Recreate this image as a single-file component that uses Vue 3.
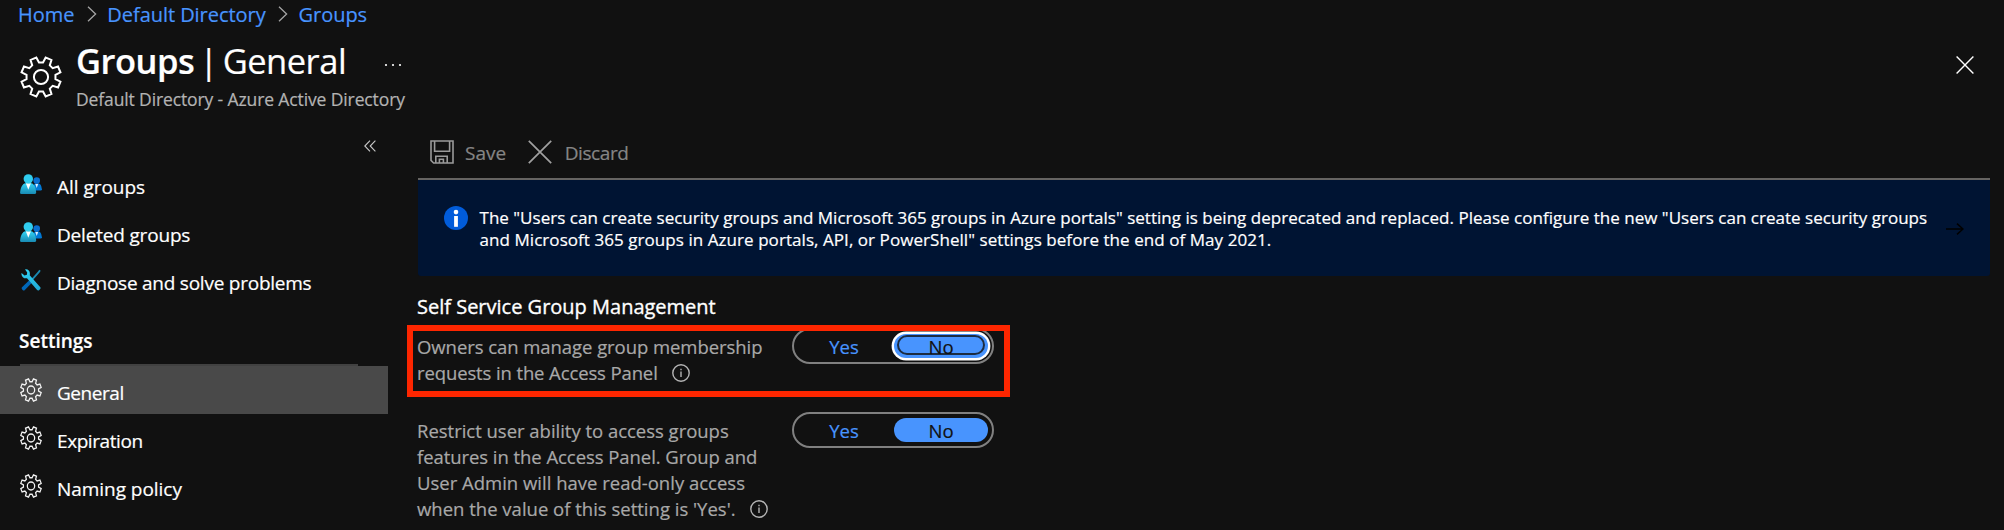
<script setup>
const crumbs = ['Home', 'Default Directory', 'Groups']

const topItems = [
  { label: 'All groups', icon: 'people', tracking: -0.04 },
  { label: 'Deleted groups', icon: 'people', tracking: -0.18 },
  { label: 'Diagnose and solve problems', icon: 'tools', tracking: -0.24 },
]

const settingsItems = [
  { label: 'General', icon: 'gear', tracking: -0.45, selected: true },
  { label: 'Expiration', icon: 'gear', tracking: -0.42 },
  { label: 'Naming policy', icon: 'gear', tracking: -0.04 },
]

const settings = [
  {
    lines: [
      { text: 'Owners can manage group membership', tracking: -0.06 },
      { text: 'requests in the Access Panel', tracking: -0.12 },
    ],
    focused: true,
  },
  {
    lines: [
      { text: 'Restrict user ability to access groups', tracking: -0.02 },
      { text: 'features in the Access Panel. Group and', tracking: -0.06 },
      { text: 'User Admin will have read-only access', tracking: 0 },
      { text: "when the value of this setting is 'Yes'.", tracking: 0 },
    ],
    focused: false,
  },
]

// Outline of an eight-tooth cog centred on the origin, notches on the axes.
function cog() {
  const pts = []
  for (let i = 0; i < 8; i++) {
    const base = i * 45
    for (const [deg, r] of [[-8, 14.6], [8, 14.6], [13.5, 20], [31.5, 20]]) {
      const a = ((base + deg) * Math.PI) / 180
      pts.push(`${(r * Math.sin(a)).toFixed(2)} ${(-r * Math.cos(a)).toFixed(2)}`)
    }
  }
  return `M${pts.join('L')}Z`
}
const cogPath = cog()
</script>

<template>
  <div class="portal">
    <nav class="crumbs">
      <template v-for="(c, i) in crumbs" :key="c">
        <svg v-if="i" class="crumb-sep" viewBox="0 0 10 16"><path d="M1 .8L8.6 8L1 15.2" /></svg>
        <a>{{ c }}</a>
      </template>
    </nav>

    <header class="head">
      <svg class="head-cog" viewBox="-21 -21 42 42">
        <path :d="cogPath" /><circle r="7.1" />
      </svg>
      <div class="head-text">
        <h1><b>Groups</b><span class="bar">|</span><span>General</span>
          <svg class="dots" viewBox="0 0 18 4"><circle cx="2" cy="2" r="1.1" /><circle cx="9" cy="2" r="1.1" /><circle cx="16" cy="2" r="1.1" /></svg>
        </h1>
        <p>Default Directory - Azure Active Directory</p>
      </div>
      <svg class="close" viewBox="0 0 18 18"><path d="M.6 .6L17.4 17.4M17.4 .6L.6 17.4" /></svg>
    </header>

    <div class="body">
      <aside class="side">
        <div class="collapse">
          <svg viewBox="0 0 12 12"><path d="M6 .6L.8 6L6 11.4M11.4 .6L6.2 6L11.4 11.4" /></svg>
        </div>
        <div v-for="item in topItems" :key="item.label" class="item">
          <svg v-if="item.icon === 'people'" class="people" viewBox="0 0 22 20">
            <defs>
              <linearGradient id="front" x1="0" y1="0" x2="0" y2="1">
                <stop offset="0" stop-color="#32d4f5" /><stop offset="1" stop-color="#198ab3" />
              </linearGradient>
            </defs>
            <path d="M12 16.5H20.6Q22 16.5 21.9 15.2C21.4 11.6 20.3 9.8 18.8 9.5H14.6Z" fill="#0078d4" />
            <path d="M15.2 9.7L16.7 14L18.3 9.7Z" fill="#dff1ff" />
            <circle cx="16.7" cy="6.6" r="3.3" fill="#0a6fd0" />
            <path d="M1.2 20Q-.1 20 .1 18.4C.7 13.2 2.6 9.6 5.4 9.2H11.2C14 9.6 15.8 13.2 16.2 18.4Q16.3 20 15 20Z" fill="url(#front)" />
            <path d="M5.8 9.2L8.3 15.8L10.9 9.2Z" fill="#fff" />
            <circle cx="8.3" cy="4.9" r="4.7" fill="#30cdef" />
          </svg>
          <svg v-else class="tools" viewBox="0 0 20 22">
            <defs>
              <linearGradient id="wrench" x1="0" y1="0" x2="0" y2="1">
                <stop offset="0" stop-color="#32d4f5" /><stop offset="1" stop-color="#1fa8d4" />
              </linearGradient>
            </defs>
            <path d="M18.3 .7L19.7 1.8L18.6 3.6L12 11L10.6 9.7L16.8 2.8Z" fill="#198ab3" />
            <path d="M8 11.5L10.6 14L3.6 21.2Q2.6 21.8 1.6 20.9L.9 20.1Q.2 19.1 1 18.3Z" fill="#0067b8" />
            <path d="M4.1 .4C6.8 -.1 9.2 2 8.9 5.2L8.7 6.2L19.3 18.2Q19.9 19 19.2 19.9L18 21.2Q17 21.9 16.1 21.1L6 9.2C3.3 9.9 .6 8.1 .4 4.9L.6 4L3.5 6.4L5.9 5.7L6.2 3.4Z" fill="url(#wrench)" />
          </svg>
          <span class="label" :style="{ letterSpacing: item.tracking + 'px' }">{{ item.label }}</span>
        </div>
        <h2>Settings</h2>
        <div
          v-for="item in settingsItems"
          :key="item.label"
          class="item"
          :class="{ selected: item.selected }"
        >
          <svg class="cog" viewBox="-21 -21 42 42" preserveAspectRatio="none">
            <path :d="cogPath" /><circle r="7" />
          </svg>
          <span class="label" :style="{ letterSpacing: item.tracking + 'px' }">{{ item.label }}</span>
        </div>
      </aside>

      <main class="main">
        <div class="toolbar">
          <svg class="save" viewBox="0 0 24 24">
            <path d="M1 1H23V23H3.6L1 20.4Z" /><path d="M4.6 1V11.2H19.6V1" /><path d="M5.8 23V16.2H17.2V23M9.4 23V19.2H13.4V23" />
          </svg>
          <span class="save-label">Save</span>
          <svg class="discard" viewBox="0 0 24 24"><path d="M.8 .8L23.2 23.2M23.2 .8L.8 23.2" /></svg>
          <span class="discard-label">Discard</span>
        </div>

        <div class="banner">
          <svg class="info" viewBox="0 0 24 24">
            <circle cx="12" cy="12" r="12" fill="#015cda" />
            <circle cx="12" cy="6.1" r="2.3" fill="#fff" />
            <path d="M10.1 10H13.9V20.8H10.1Z" fill="#fff" />
          </svg>
          <p>
            The "Users can create security groups and Microsoft 365 groups in Azure portals" setting is being deprecated and replaced. Please configure the new "Users can create security groups<br /><span class="second">and Microsoft 365 groups in Azure portals, API, or PowerShell" settings before the end of May 2021.</span>
          </p>
          <svg class="arrow" viewBox="0 0 18 12"><path d="M0 6H17M11 .6L17 6L11 11.4" /></svg>
        </div>

        <h3>Self Service Group Management</h3>

        <section v-for="s in settings" :key="s.lines[0].text" class="row">
          <div class="desc">
            <div v-for="(line, i) in s.lines" :key="i" class="line">
              <span :style="{ letterSpacing: line.tracking + 'px' }">{{ line.text }}</span>
              <svg v-if="i === s.lines.length - 1" class="hint" viewBox="0 0 18 18">
                <circle cx="9" cy="9" r="8.2" />
                <path d="M9 7.6V13M9 4.8V6.2" />
              </svg>
            </div>
          </div>
          <div class="toggle">
            <span class="yes">Yes</span>
            <span class="no" :class="{ focused: s.focused }">No</span>
          </div>
          <div v-if="s.focused" class="highlight"></div>
        </section>
      </main>
    </div>
  </div>
</template>

<style>
body {
  background: #111;
}
</style>

<style scoped>
.portal {
  width: 2004px;
  height: 530px;
  overflow: hidden;
  background: #111;
  color: #fff;
  font-family: "Open Sans", "Noto Sans", sans-serif;
  font-size: 19px;
  white-space: nowrap;
  -webkit-text-stroke: 0.2px currentColor;
}
h1, h2, h3, p {
  margin: 0;
  font-weight: 400;
}
svg {
  display: block;
  flex: none;
  fill: none;
}
.crumbs {
  display: flex;
  height: 28px;
  padding-left: 18px;
  font-size: 20px;
  line-height: 30px;
  letter-spacing: -0.05px;
  color: #4894fe;
}
.crumb-sep {
  width: 10px;
  height: 16px;
  margin: 6px 10.5px 0 12.5px;
  stroke: #a5a5a5;
  stroke-width: 1.3;
}
.head {
  display: flex;
  align-items: flex-start;
  height: 83px;
  padding-left: 20px;
}
.head-cog {
  width: 42px;
  height: 42px;
  margin-top: 28px;
  stroke: #fff;
  stroke-width: 2;
}
.head-text {
  flex: 1;
  padding: 11px 0 0 14px;
}
h1 {
  display: flex;
  font-size: 34.5px;
  line-height: 44px;
  letter-spacing: -0.5px;
}
h1 b {
  font-weight: 600;
}
.bar {
  margin: 0 5px 0 5px;
}
.dots {
  width: 18px;
  height: 4px;
  margin: 24px 0 0 38px;
  fill: #fff;
}
.head-text p {
  margin-top: 4px;
  font-size: 17.5px;
  line-height: 25px;
  letter-spacing: -0.12px;
  color: #b3b3b3;
}
.close {
  width: 18px;
  height: 18px;
  margin: 28px 30px 0 0;
  stroke: #fff;
  stroke-width: 1.4;
}
.body {
  display: flex;
  gap: 30px;
}
.side {
  width: 388px;
}
.collapse {
  display: flex;
  height: 49px;
  padding-left: 364px;
}
.collapse svg {
  width: 12px;
  height: 12px;
  margin-top: 29px;
  stroke: #c8c8c8;
  stroke-width: 1.1;
}
.item {
  display: flex;
  align-items: center;
  height: 48px;
  padding-left: 20px;
}
.item.selected {
  background: #494949;
}
.people {
  width: 22px;
  height: 20px;
}
.tools {
  width: 20px;
  height: 22px;
  margin: 0 1px;
}
.cog {
  width: 22px;
  height: 24px;
  stroke: #f2f2f2;
  stroke-width: 2.4;
}
.label {
  margin: 5px 0 0 15px;
  line-height: 30px;
}
h2 {
  width: 338px;
  height: 60px;
  margin-left: 20px;
  border-bottom: 2px solid #414141;
  font-size: 19px;
  font-weight: 600;
  line-height: 75px;
  text-indent: -1px;
}
.main {
  width: 1572px;
}
.toolbar {
  display: flex;
  align-items: center;
  height: 69px;
  padding: 15px 0 0 12px;
  box-sizing: border-box;
  border-bottom: 2px solid #666462;
  color: #858585;
}
.toolbar span {
  padding-top: 1px;
}
.save {
  width: 24px;
  height: 24px;
  stroke: #9a9a9a;
  stroke-width: 1.6;
}
.toolbar .save-label {
  margin: 0 21.5px 0 11px;
}
.discard {
  width: 24px;
  height: 24px;
  margin-right: 13px;
  stroke: #a0a0a0;
  stroke-width: 1.7;
}
.discard-label {
  letter-spacing: -0.4px;
}
.banner {
  display: flex;
  align-items: flex-start;
  height: 96px;
  padding: 26px 26px 0;
  box-sizing: border-box;
  border-radius: 0 0 3px 3px;
  background: #001433;
}
.info {
  width: 24px;
  height: 24px;
}
.banner p {
  flex: 1;
  margin: 1px 0 0 11.5px;
  font-size: 17px;
  line-height: 22px;
  letter-spacing: 0.02px;
}
.second {
  letter-spacing: 0.06px;
}
.arrow {
  width: 18px;
  height: 12px;
  margin-top: 17px;
  stroke: #000;
  stroke-width: 1.5;
}
h3 {
  margin: 17px 0 7px;
  font-size: 20px;
  line-height: 28px;
  text-indent: -1px;
  -webkit-text-stroke-width: 0.35px;
}
.row {
  position: relative;
  display: grid;
  grid-template-columns: 374px 202px;
  align-items: start;
  margin-bottom: 26px;
}
.desc {
  padding-top: 6px;
  font-size: 18.5px;
  color: #a8a8a8;
  text-indent: -1px;
}
.line {
  display: flex;
  align-items: center;
  height: 26px;
  line-height: 26px;
}
.hint {
  width: 18px;
  height: 18px;
  margin-left: 14px;
  stroke: #b4b4b4;
  stroke-width: 1.4;
}
.toggle {
  display: flex;
  height: 36px;
  padding: 4px 4px 4px 0;
  box-sizing: border-box;
  border: 2px solid #808080;
  border-radius: 18px;
  font-size: 18.5px;
  line-height: 25px;
  text-align: center;
}
.yes {
  width: 100px;
  color: #4894fe;
}
.no {
  position: relative;
  width: 94px;
  border-radius: 12px;
  background: #4894fe;
  color: #111;
}
.no.focused {
  box-shadow: 0 0 0 2.4px #fff;
}
.no.focused::after {
  content: "";
  position: absolute;
  inset: 1px 3px 3px;
  border: 2px solid rgba(17, 17, 17, 0.8);
  border-radius: 10px;
}
.highlight {
  position: absolute;
  left: -11px;
  top: -3px;
  width: 603px;
  height: 72px;
  box-sizing: border-box;
  border: 6px solid #fe2600;
}
</style>
